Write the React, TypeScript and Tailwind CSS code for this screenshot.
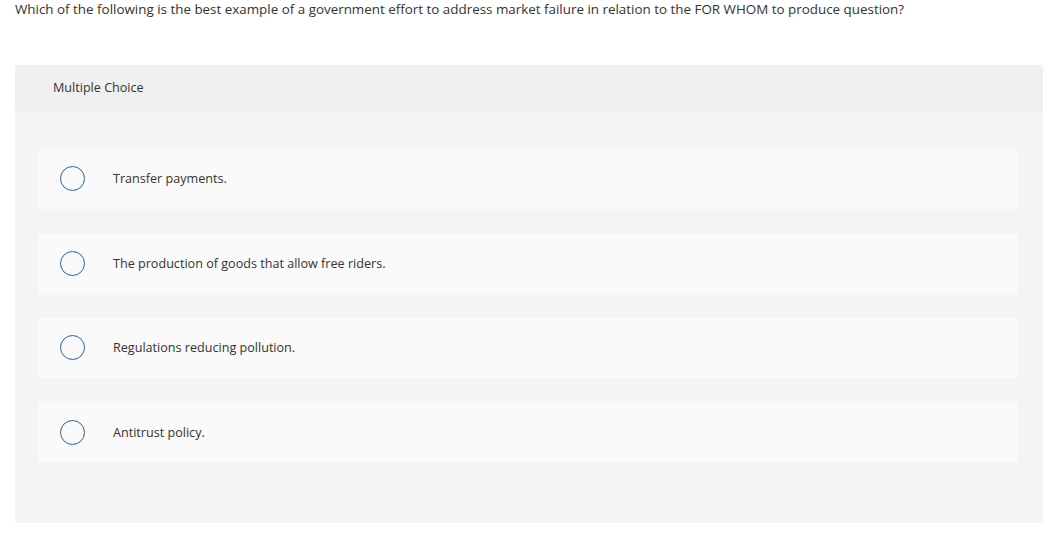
const options = [
  "Transfer payments.",
  "The production of goods that allow free riders.",
  "Regulations reducing pollution.",
  "Antitrust policy.",
];

function Option({ text }: { text: string }) {
  return (
    <div className="flex items-center h-[59.5px] bg-[#fafafa] rounded-[3px] px-[22px]">
      <span className="w-[25px] h-[25px] rounded-full border-[1.5px] border-[#2d6199] shrink-0"></span>
      <span className="ml-[28px] pt-[2px] text-[12.6px] text-[#333]">{text}</span>
    </div>
  );
}

export default function App() {
  return (
    <div className="bg-white w-[1052px] h-[541px] font-['Open_Sans',sans-serif] text-[#333]">
      <p className="px-[15px] pt-[0px] text-[13.4px] leading-[18px]">
        Which of the following is the best example of a government effort to address market failure in relation to the FOR WHOM to produce question?
      </p>
      <div className="ml-[15px] w-[1028px] mt-[47px] rounded-[2px] bg-[#f4f4f4] h-[458px] flex flex-col">
        <div className="h-[46px] bg-[#f0f0f0] flex items-center px-[38px] pt-[1px] text-[12.6px]">Multiple Choice</div>
        <div className="flex flex-col gap-[25px] pl-[23px] pr-[25px] pt-[38px]">
          {options.map((o) => (
            <Option key={o} text={o} />
          ))}
        </div>
      </div>
    </div>
  );
}
